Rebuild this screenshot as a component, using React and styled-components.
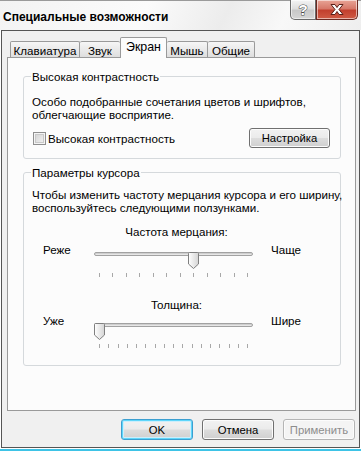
import React from "react";
import styled, { createGlobalStyle } from "styled-components";

const FONT = `"Liberation Sans", Arial, sans-serif`;
const SIZE = "11.6px";

const GlobalStyle = createGlobalStyle`
  html, body {
    margin: 0;
    padding: 0;
    background: #ffffff;
  }
  body {
    font-family: ${FONT};
    font-size: ${SIZE};
    color: #000;
  }
`;

const Window = styled.div`
  width: 361px;
  height: 452px;
  display: flex;
  flex-direction: column;
  overflow: hidden;
  background: #ffffff;
`;

const TitleBar = styled.div`
  height: 30px;
  display: flex;
  justify-content: space-between;
  align-items: flex-start;
  border-top: 1px solid #9a9a9a;
  box-sizing: border-box;
  background: linear-gradient(115deg, #f3f3f3 0%, #fbfbfb 40%, #ececec 62%, #f8f8f8 78%, #eeeeee 100%);
`;

const Caption = styled.div`
  padding: 9px 0 0 3px;
  font-family: ${FONT};
  font-weight: bold;
  font-size: 12px;
  line-height: 14px;
  color: #000;
`;

const CaptionButtons = styled.div`
  display: flex;
  margin: -1px 3px 0 0;
`;

const CaptionButton = styled.div`
  width: ${(p) => p.w}px;
  height: 20px;
  box-sizing: border-box;
  display: flex;
  align-items: center;
  justify-content: center;
  border: 1px solid ${(p) => (p.red ? "#6b2a22" : "#6a6a6a")};
  border-top: none;
  border-radius: ${(p) => (p.red ? "0 0 5px 0" : "0 0 0 5px")};
  background: ${(p) =>
    p.red
      ? "linear-gradient(#e8a496 0%, #d7796a 45%, #c2402e 55%, #cf5b45 100%)"
      : "linear-gradient(#f4f4f4 0%, #dedede 45%, #c8c8c8 55%, #d6d6d6 100%)"};
  box-shadow: inset 0 0 0 1px rgba(255, 255, 255, 0.55);
`;

const HelpGlyph = styled.span`
  font-family: ${FONT};
  font-weight: bold;
  font-size: 15px;
  line-height: 15px;
  color: #ffffff;
  -webkit-text-stroke: 1px #4a4a4a;
  paint-order: stroke fill;
`;

const Client = styled.div`
  height: 418px;
  box-sizing: border-box;
  margin: 0 1px;
  border: 1px solid #555555;
  background: #f0f0f0;
  padding: 6px 3px 0 5px;
  display: flex;
  flex-direction: column;
`;

const TabStrip = styled.div`
  height: 20px;
  display: flex;
  align-items: flex-end;
  padding-left: 3px;
  position: relative;
  z-index: 1;
`;

const Tab = styled.div`
  width: ${(p) => p.w}px;
  height: ${(p) => (p.active ? 21 : 16)}px;
  margin-bottom: ${(p) => (p.active ? -1 : 0)}px;
  box-sizing: border-box;
  border: 1px solid #9a9a9a;
  border-bottom: none;
  border-left-width: ${(p) => (p.first || p.active ? 1 : 0)}px;
  border-right-width: ${(p) => (p.beforeActive ? 0 : 1)}px;
  border-radius: 2px 2px 0 0;
  background: ${(p) => (p.active ? "#fcfcfc" : "linear-gradient(#f6f6f6, #dedede)")};
  display: flex;
  justify-content: center;
  align-items: ${(p) => (p.active ? "flex-start" : "center")};
  padding-top: ${(p) => (p.active ? 3 : 1)}px;
  font-size: ${(p) => (p.active ? "12.4px" : SIZE)};
  line-height: 13px;
  white-space: nowrap;
`;

const Panel = styled.div`
  width: 349px;
  height: 354px;
  box-sizing: border-box;
  border: 1px solid #9a9a9a;
  background: #fcfcfc;
  padding: 12px 14px 0 15px;
  display: flex;
  flex-direction: column;
  gap: 7px;
`;

const Group = styled.fieldset`
  margin: 0;
  min-width: 0;
  border: 1px solid #d5d9dc;
  border-radius: 3px;
  padding: ${(p) => p.pad};
  display: flex;
  flex-direction: column;
`;

const Legend = styled.legend`
  padding: 0 1px;
  margin-left: -1px;
  line-height: 13px;
  font-size: ${SIZE};
`;

const Text = styled.div`
  margin-top: ${(p) => p.mt}px;
  line-height: 13px;
  font-size: ${SIZE};
  white-space: nowrap;
`;

const CheckRow = styled.div`
  margin-top: 7px;
  display: flex;
  justify-content: space-between;
  align-items: center;
  padding-right: 10px;
`;

const CheckLabel = styled.label`
  display: flex;
  align-items: center;
  gap: 2px;
  margin-left: 1px;
  font-size: ${SIZE};
`;

const Box = styled.span`
  width: 13px;
  height: 13px;
  box-sizing: border-box;
  border: 1px solid #8f8f8f;
  background: linear-gradient(135deg, #cfcfcf 0%, #e6e6e6 60%, #f6f6f6 100%);
  box-shadow: inset 0 0 0 1px #f4f4f4, inset 0 0 0 2px #c9c9c9;
`;

const Button = styled.div`
  width: ${(p) => p.w}px;
  height: ${(p) => p.h}px;
  box-sizing: border-box;
  border: 1px solid ${(p) => (p.focus ? "#3c9fd0" : p.disabled ? "#b5b5b5" : "#707070")};
  border-radius: 3px;
  background: ${(p) =>
    p.disabled
      ? "#f4f4f4"
      : "linear-gradient(#f2f2f2 0%, #ebebeb 48%, #dddddd 52%, #cfcfcf 100%)"};
  box-shadow: ${(p) =>
    p.focus ? "inset 0 0 0 1px #5fd6fa, inset 0 0 0 2px #cdeefb" : "inset 0 0 0 1px #fcfcfc"};
  color: ${(p) => (p.disabled ? "#8d8d8d" : "#000")};
  display: flex;
  align-items: center;
  justify-content: center;
  font-size: 11.3px;
`;

const SliderCaption = styled.div`
  margin-top: ${(p) => p.mt}px;
  padding-left: 65px;
  width: 159px;
  text-align: center;
  line-height: 13px;
  font-size: ${SIZE};
  white-space: nowrap;
`;

const SliderRow = styled.div`
  margin-top: ${(p) => p.mt}px;
  padding-left: 11px;
  display: grid;
  grid-template-columns: 51px 159px 1fr;
  align-items: start;
`;

const EndLabel = styled.div`
  line-height: 13px;
  font-size: ${SIZE};
  padding-left: ${(p) => (p.right ? 18 : 0)}px;
`;

const SliderBox = styled.div`
  padding-top: 3px;
`;

const ThumbArea = styled.div`
  position: relative;
  height: 17px;
`;

const Track = styled.div`
  margin-top: 6px;
  height: 4px;
  box-sizing: border-box;
  border: 1px solid #a2a2a2;
  border-radius: 2px;
  background: #e6e6e6;
  box-shadow: inset 0 1px 0 #cfcfcf;
`;

const Thumb = styled.svg`
  position: absolute;
  top: 0;
`;

const Ticks = styled.div`
  margin: 4px 5px 0;
  height: 4px;
  display: flex;
  justify-content: space-between;
`;

const Tick = styled.span`
  width: 1px;
  height: 4px;
  background: #a8a8a8;
`;

const Footer = styled.div`
  margin-top: 8px;
  display: flex;
  justify-content: flex-end;
  gap: 9px;
  padding-right: 1px;
`;

const BottomEdge = styled.div`
  height: 4px;
  border-top: 1px solid #ffffff;
  box-sizing: border-box;
  background: linear-gradient(#3ec3e6 0, #3ec3e6 2px, #ffffff 2px);
`;

const Slider = ({ value, count }) => {
  const left = (value * 148) / (count - 1);
  return (
    <SliderBox>
      <ThumbArea>
        <Track />
        <Thumb width="11" height="17" viewBox="0 0 11 17" style={{ left }}>
          <defs>
            <linearGradient id="th" x1="0" x2="1" y1="0" y2="0">
              <stop offset="0" stopColor="#ffffff" />
              <stop offset="1" stopColor="#d4d4d4" />
            </linearGradient>
          </defs>
          <path
            d="M1.5 0.5 H9.5 Q10.5 0.5 10.5 1.5 V12 L5.5 16.5 L0.5 12 V1.5 Q0.5 0.5 1.5 0.5 Z"
            fill="url(#th)"
            stroke="#7f7f7f"
          />
        </Thumb>
      </ThumbArea>
      <Ticks>
        {Array.from({ length: count }).map((_, i) => (
          <Tick key={i} />
        ))}
      </Ticks>
    </SliderBox>
  );
};

const tabs = [
  { label: "Клавиатура", w: 70 },
  { label: "Звук", w: 40 },
  { label: "Экран", w: 47, active: true },
  { label: "Мышь", w: 41 },
  { label: "Общие", w: 47 },
];

const App = () => {
  return (
    <Window>
      <GlobalStyle />
      <TitleBar>
        <Caption>Специальные возможности</Caption>
        <CaptionButtons>
          <CaptionButton w={26}>
            <HelpGlyph>?</HelpGlyph>
          </CaptionButton>
          <CaptionButton w={42} red>
            <svg width="18" height="13" viewBox="0 0 18 13">
              <path
                d="M3 1.5 H7 L9 4.5 L11 1.5 H15 L11 6.5 L15 11.5 H11 L9 8.5 L7 11.5 H3 L7 6.5 Z"
                fill="#ffffff"
                stroke="#5a1f18"
                strokeWidth="1"
                strokeLinejoin="round"
              />
            </svg>
          </CaptionButton>
        </CaptionButtons>
      </TitleBar>

      <Client>
        <TabStrip>
          {tabs.map((t, i) => (
            <Tab
              key={t.label}
              w={t.w}
              active={t.active}
              first={i === 0}
              beforeActive={tabs[i + 1] && tabs[i + 1].active}
            >
              {t.label}
            </Tab>
          ))}
        </TabStrip>

        <Panel>
          <Group pad="0 0 10px 8px">
            <Legend>Высокая контрастность</Legend>
            <Text mt={12}>
              Особо подобранные сочетания цветов и шрифтов,
              <br />
              облегчающие восприятие.
            </Text>
            <CheckRow>
              <CheckLabel>
                <Box />
                Высокая контрастность
              </CheckLabel>
              <Button w={81} h={20}>
                Настройка
              </Button>
            </CheckRow>
          </Group>

          <Group pad="0 0 17px 8px">
            <Legend>Параметры курсора</Legend>
            <Text mt={9}>
              Чтобы изменить частоту мерцания курсора и его ширину,
              <br />
              воспользуйтесь следующими ползунками.
            </Text>
            <SliderCaption mt={11}>Частота мерцания:</SliderCaption>
            <SliderRow mt={5}>
              <EndLabel>Реже</EndLabel>
              <Slider value={7} count={12} />
              <EndLabel right>Чаще</EndLabel>
            </SliderRow>
            <SliderCaption mt={21}>Толщина:</SliderCaption>
            <SliderRow mt={3}>
              <EndLabel>Уже</EndLabel>
              <Slider value={0} count={17} />
              <EndLabel right>Шире</EndLabel>
            </SliderRow>
          </Group>
        </Panel>

        <Footer>
          <Button w={72} h={21} focus>
            OK
          </Button>
          <Button w={72} h={21}>
            Отмена
          </Button>
          <Button w={72} h={21} disabled>
            Применить
          </Button>
        </Footer>
      </Client>
      <BottomEdge />
    </Window>
  );
};

export default App;
